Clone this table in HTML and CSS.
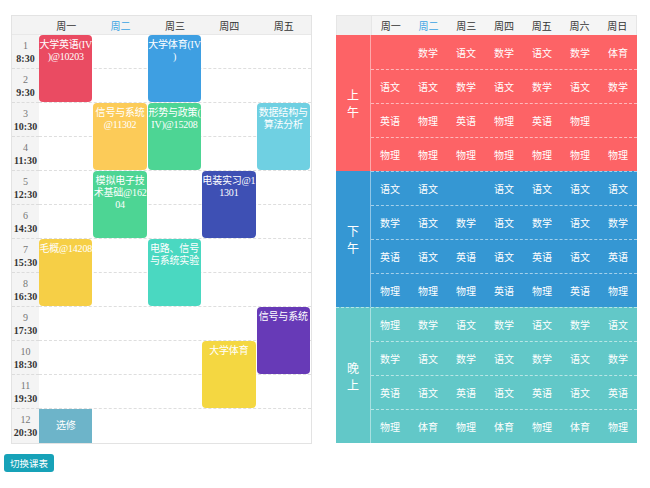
FILE: index.html
```html
<!DOCTYPE html>
<html lang="zh">
<head>
<meta charset="utf-8">
<title>课表</title>
<link rel="stylesheet" href="styles.css">
</head>
<body>
<div class="page">
  <div class="tables">
    <div class="week">
      <div class="wh wh-corner"></div>
      <div class="wh">周一</div>
      <div class="wh today">周二</div>
      <div class="wh">周三</div>
      <div class="wh">周四</div>
      <div class="wh">周五</div>

      <div class="tm r2"><span class="no">1</span><b>8:30</b></div>
      <div class="tm r3"><span class="no">2</span><b>9:30</b></div>
      <div class="tm r4"><span class="no">3</span><b>10:30</b></div>
      <div class="tm r5"><span class="no">4</span><b>11:30</b></div>
      <div class="tm r6"><span class="no">5</span><b>12:30</b></div>
      <div class="tm r7"><span class="no">6</span><b>14:30</b></div>
      <div class="tm r8"><span class="no">7</span><b>15:30</b></div>
      <div class="tm r9"><span class="no">8</span><b>16:30</b></div>
      <div class="tm r10"><span class="no">9</span><b>17:30</b></div>
      <div class="tm r11"><span class="no">10</span><b>18:30</b></div>
      <div class="tm r12"><span class="no">11</span><b>19:30</b></div>
      <div class="tm r13 last"><span class="no">12</span><b>20:30</b></div>

      <div class="line r2"></div>
      <div class="line r3"></div>
      <div class="line r4"></div>
      <div class="line r5"></div>
      <div class="line r6"></div>
      <div class="line r7"></div>
      <div class="line r8"></div>
      <div class="line r9"></div>
      <div class="line r10"></div>
      <div class="line r11"></div>
      <div class="line r12"></div>

      <div class="course c2 r2 s2 red">大学英语(IV)@10203</div>
      <div class="course c4 r2 s2 blue">大学体育(IV)</div>
      <div class="course c3 r4 s2 orange">信号与系统@11302</div>
      <div class="course c4 r4 s2 green">形势与政策(IV)@15208</div>
      <div class="course c6 r4 s2 cyan">数据结构与算法分析</div>
      <div class="course c3 r6 s2 green">模拟电子技术基础@16204</div>
      <div class="course c5 r6 s2 indigo">电装实习@11301</div>
      <div class="course c2 r8 s2 yellow">毛概@14208</div>
      <div class="course c4 r8 s2 teal">电路、信号与系统实验</div>
      <div class="course c6 r10 s2 purple">信号与系统</div>
      <div class="course c5 r11 s2 gold">大学体育</div>
      <div class="course c2 r13 elective">选修</div>
    </div>

    <div class="term">
      <div class="th-row">
        <div class="th th-corner"></div>
        <div class="th">周一</div>
        <div class="th today">周二</div>
        <div class="th">周三</div>
        <div class="th">周四</div>
        <div class="th">周五</div>
        <div class="th">周六</div>
        <div class="th">周日</div>
      </div>

      <div class="sec morning">
        <div class="label">上<br>午</div>
        <div class="cells">
          <div class="row"><span></span><span>数学</span><span>语文</span><span>数学</span><span>语文</span><span>数学</span><span>体育</span></div>
          <div class="row"><span>语文</span><span>语文</span><span>数学</span><span>语文</span><span>数学</span><span>语文</span><span>数学</span></div>
          <div class="row"><span>英语</span><span>物理</span><span>英语</span><span>物理</span><span>英语</span><span>物理</span><span></span></div>
          <div class="row"><span>物理</span><span>物理</span><span>物理</span><span>物理</span><span>物理</span><span>物理</span><span>物理</span></div>
        </div>
      </div>

      <div class="sec afternoon">
        <div class="label">下<br>午</div>
        <div class="cells">
          <div class="row"><span>语文</span><span>语文</span><span></span><span>语文</span><span>语文</span><span>语文</span><span>语文</span></div>
          <div class="row"><span>数学</span><span>语文</span><span>数学</span><span>语文</span><span>数学</span><span>语文</span><span>数学</span></div>
          <div class="row"><span>英语</span><span>语文</span><span>英语</span><span>语文</span><span>英语</span><span>语文</span><span>英语</span></div>
          <div class="row"><span>物理</span><span>物理</span><span>物理</span><span>英语</span><span>物理</span><span>英语</span><span>物理</span></div>
        </div>
      </div>

      <div class="sec evening">
        <div class="label">晚<br>上</div>
        <div class="cells">
          <div class="row"><span>物理</span><span>数学</span><span>语文</span><span>数学</span><span>语文</span><span>数学</span><span>语文</span></div>
          <div class="row"><span>数学</span><span>语文</span><span>数学</span><span>语文</span><span>数学</span><span>语文</span><span>数学</span></div>
          <div class="row"><span>英语</span><span>语文</span><span>英语</span><span>语文</span><span>英语</span><span>语文</span><span>英语</span></div>
          <div class="row"><span>物理</span><span>体育</span><span>物理</span><span>体育</span><span>物理</span><span>体育</span><span>物理</span></div>
        </div>
      </div>
    </div>
  </div>

  <button class="switch" type="button">切换课表</button>
</div>
</body>
</html>
```

FILE: styles.css
```css
* { box-sizing: border-box; }

body {
  margin: 0;
  background: #ffffff;
  font-family: "Noto Sans CJK SC", "Noto Sans", sans-serif;
  color: #333333;
}

.page {
  padding: 15px 0 0 4px;
}

.tables {
  display: flex;
  align-items: flex-start;
  gap: 24px;
  margin-left: 7px;
}

/* ---------- week timetable ---------- */
.week {
  display: grid;
  grid-template-columns: 27px repeat(5, 54.4px);
  grid-template-rows: 19px repeat(12, 34px);
  width: 301px;
  border: 1px solid #e3e3e3;
  font-family: "Liberation Serif", "Noto Sans CJK SC", serif;
  background: #ffffff;
}

.wh {
  grid-row: 1;
  background: #f3f3f3;
  border-bottom: 1px solid #e8e8e8;
  font-family: "Noto Sans CJK SC", sans-serif;
  font-size: 10px;
  color: #333333;
  display: flex;
  align-items: center;
  justify-content: center;
}

.wh.today, .th.today { color: #3aa3e3; }

.tm {
  grid-column: 1;
  background: #f4f4f4;
  border-bottom: 1px dashed #dcdcdc;
  display: flex;
  flex-direction: column;
  align-items: center;
  justify-content: center;
  font-size: 10px;
  line-height: 13px;
}
.tm.last { border-bottom: 0; }
.tm .no { color: #777777; }
.tm b { color: #333333; font-weight: bold; }

.line {
  grid-column: 2 / 7;
  border-bottom: 1px dashed #dedede;
}

.course {
  margin: 0 1px 1px 0;
  border-radius: 4px;
  color: #ffffff;
  font-size: 10px;
  line-height: 12px;
  letter-spacing: -0.2px;
  text-align: center;
  line-break: anywhere;
  word-break: break-all;
  padding: 4px 0 0;
}

.c2 { grid-column: 2; }
.c3 { grid-column: 3; }
.c4 { grid-column: 4; }
.c5 { grid-column: 5; }
.c6 { grid-column: 6; }

.r2 { grid-row: 2; }
.r3 { grid-row: 3; }
.r4 { grid-row: 4; }
.r5 { grid-row: 5; }
.r6 { grid-row: 6; }
.r7 { grid-row: 7; }
.r8 { grid-row: 8; }
.r9 { grid-row: 9; }
.r10 { grid-row: 10; }
.r11 { grid-row: 11; }
.r12 { grid-row: 12; }
.r13 { grid-row: 13; }

.course.r2.s2 { grid-row: 2 / span 2; }
.course.r4.s2 { grid-row: 4 / span 2; }
.course.r6.s2 { grid-row: 6 / span 2; }
.course.r8.s2 { grid-row: 8 / span 2; }
.course.r10.s2 { grid-row: 10 / span 2; }
.course.r11.s2 { grid-row: 11 / span 2; }

.red { background: #ea4b62; }
.blue { background: #3e9fe2; }
.orange { background: #fccb58; }
.green { background: #4dd594; }
.cyan { background: #6fd0e2; }
.indigo { background: #3e50b4; }
.yellow { background: #f6cf46; }
.teal { background: #4ad8c1; }
.purple { background: #673ab7; }
.gold { background: #f4d741; }

.course.elective {
  background: #6db4c9;
  border-radius: 0;
  margin: 0 1px 0 0;
  padding: 0;
  display: flex;
  align-items: center;
  justify-content: center;
}

/* ---------- term timetable ---------- */
.term {
  width: 301px;
  display: flex;
  flex-direction: column;
  font-size: 10px;
}

.th-row {
  display: grid;
  grid-template-columns: 35px repeat(7, 1fr);
  height: 20px;
  border: 1px solid #e6e6e6;
  border-bottom: 0;
  background: #f5f5f5;
}

.th {
  display: flex;
  align-items: center;
  justify-content: center;
  color: #333333;
}
.th-corner {
  background: #f0f0f0;
  border-right: 1px solid #e6e6e6;
}

.sec {
  display: flex;
  color: #ffffff;
}
.morning { background: #fd6366; }
.afternoon { background: #3597d3; }
.evening { background: #62c8c8; border-top: 1px dashed rgba(255, 255, 255, 0.55); }

.label {
  width: 35px;
  flex: none;
  border-right: 1px solid rgba(255, 255, 255, 0.45);
  display: flex;
  align-items: center;
  justify-content: center;
  text-align: center;
  font-size: 12px;
  line-height: 17px;
}

.cells {
  flex: 1;
  display: flex;
  flex-direction: column;
}

.row {
  display: grid;
  grid-template-columns: repeat(7, 1fr);
  height: 34px;
  border-top: 1px dashed rgba(255, 255, 255, 0.55);
}
.morning .row:first-child { border-top: 0; }
.evening .row:first-child { border-top: 0; height: 33px; }

.row span {
  display: flex;
  align-items: center;
  justify-content: center;
}

/* ---------- button ---------- */
.switch {
  margin-top: 10px;
  display: block;
  height: 18px;
  padding: 0 6px;
  border: 0;
  border-radius: 3px;
  background: #17a2b8;
  color: #ffffff;
  font-family: "Noto Sans CJK SC", sans-serif;
  font-size: 9.5px;
  line-height: 18px;
}
```
